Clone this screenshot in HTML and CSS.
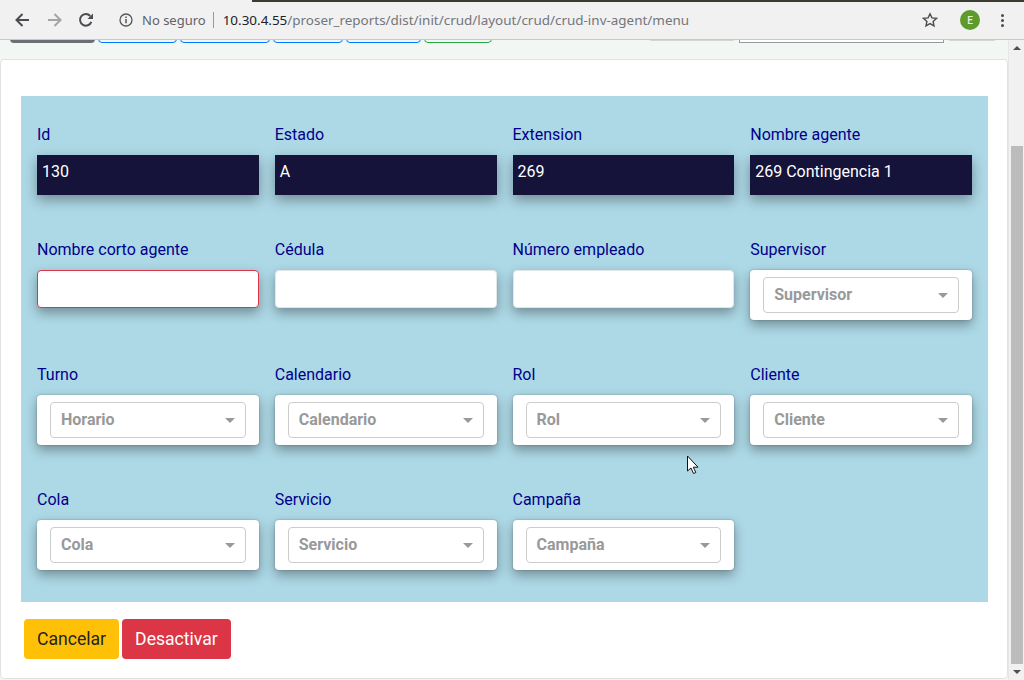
FILE: index.html
```html
<!DOCTYPE html>
<html>
<head>
    <title>CRUD agente</title>
    <link rel="stylesheet" href="styles.css">
</head>
<body>
    <div class="tabstrip"><div class="tab-end"></div></div>
    <div class="toolbar">
        <svg class="nav-icon" width="16" height="16" viewBox="0 0 16 16"><path d="M15 8H2.500M8.500 2 2.500 8l6 6" fill="none" stroke="#4a4c50" stroke-width="2"/></svg>
        <svg class="nav-icon" width="16" height="16" viewBox="0 0 16 16"><path d="M1 8h12.500M7.500 2l6 6-6 6" fill="none" stroke="#a3a4a6" stroke-width="2"/></svg>
        <svg class="nav-icon reload" width="16" height="16" viewBox="0 0 16 16"><path d="M13.300 9.800A5.800 5.800 0 1 1 12.200 4" fill="none" stroke="#4a4c50" stroke-width="2"/><path d="M9.500 7H15V1.500z" fill="#4a4c50"/></svg>
        <svg class="info-icon" width="14" height="14" viewBox="0 0 14 14"><circle cx="7" cy="7" r="6" fill="none" stroke="#55575a" stroke-width="1.300"/><path d="M7 6v4.300M7 3.500v1.400" stroke="#55575a" stroke-width="1.500"/></svg>
        <span class="secure">No seguro</span>
        <span class="sep"></span>
        <span class="url"><span class="host">10.30.4.55</span>/proser_reports/dist/init/crud/layout/crud/crud-inv-agent/menu</span>
        <svg class="star" width="16" height="16" viewBox="0 0 16 16"><path d="M8 1.800l1.900 4.100 4.500.5-3.300 3 .9 4.400L8 11.600l-4 2.200.9-4.400-3.300-3 4.500-.5z" fill="none" stroke="#4a4c50" stroke-width="1.400"/></svg>
        <span class="avatar">E</span>
        <span class="dots"><i></i><i></i><i></i></span>
    </div>

    <div class="viewport">
        <div class="page">
            <div class="top-buttons">
                <span class="tb tb-dark"></span>
                <span class="tb tb-blue tb-1"></span>
                <span class="tb tb-blue tb-2"></span>
                <span class="tb tb-blue tb-3"></span>
                <span class="tb tb-blue tb-4"></span>
                <span class="tb tb-green"></span>
                <span class="tb-spacer"></span>
                <span class="tb tb-grey tb-5"></span>
                <span class="tb-search"></span>
                <span class="tb tb-grey tb-6"></span>
            </div>
            <div class="card">
                <form class="panel">
                    <div class="field"><label>Id</label><div class="ro">130</div></div>
                    <div class="field"><label>Estado</label><div class="ro">A</div></div>
                    <div class="field"><label>Extension</label><div class="ro">269</div></div>
                    <div class="field"><label>Nombre agente</label><div class="ro">269 Contingencia 1</div></div>

                    <div class="field"><label>Nombre corto agente</label><div class="text-input invalid"></div></div>
                    <div class="field"><label>Cédula</label><div class="text-input"></div></div>
                    <div class="field"><label>Número empleado</label><div class="text-input"></div></div>
                    <div class="field"><label>Supervisor</label><div class="select-card"><div class="select-box"><span>Supervisor</span><i class="caret"></i></div></div></div>

                    <div class="field"><label>Turno</label><div class="select-card"><div class="select-box"><span>Horario</span><i class="caret"></i></div></div></div>
                    <div class="field"><label>Calendario</label><div class="select-card"><div class="select-box"><span>Calendario</span><i class="caret"></i></div></div></div>
                    <div class="field"><label>Rol</label><div class="select-card"><div class="select-box"><span>Rol</span><i class="caret"></i></div></div></div>
                    <div class="field"><label>Cliente</label><div class="select-card"><div class="select-box"><span>Cliente</span><i class="caret"></i></div></div></div>

                    <div class="field"><label>Cola</label><div class="select-card"><div class="select-box"><span>Cola</span><i class="caret"></i></div></div></div>
                    <div class="field"><label>Servicio</label><div class="select-card"><div class="select-box"><span>Servicio</span><i class="caret"></i></div></div></div>
                    <div class="field"><label>Campaña</label><div class="select-card"><div class="select-box"><span>Campaña</span><i class="caret"></i></div></div></div>
                </form>
                <div class="actions">
                    <button class="btn btn-cancel" type="button">Cancelar</button>
                    <button class="btn btn-off" type="button">Desactivar</button>
                </div>
            </div>
        </div>
        <div class="scrollbar">
            <div class="arrow-up"></div>
            <div class="track"><div class="thumb"></div></div>
            <div class="arrow-down"></div>
        </div>
    </div>

    <svg class="cursor" width="14" height="20" viewBox="0 0 14 20"><path d="M1.500 1v15l3.500-3 2.500 5.500 2.300-1-2.500-5.300H12z" fill="#fff" stroke="#111" stroke-width="1"/></svg>
</body>
</html>
```

FILE: styles.css
```css
html, body { margin: 0; height: 680px; overflow: hidden; }
body { font-family: Roboto, sans-serif; font-size: 16px; background: #f3f7f3; position: relative; }

/* browser chrome */
.tabstrip { height: 2px; background: #f1f1f2; }
.tab-end { height: 2px; margin-left: 252px; background: #3c3b32; }
.toolbar { height: 38px; padding-bottom: 1px; box-sizing: border-box; background: #f1f1f2; border-bottom: 1px solid #c9c9ca; display: flex; align-items: center; color: #5f6368; }
.nav-icon { margin-left: 14px; flex: none; }
.nav-icon + .nav-icon { margin-left: 17px; }
.nav-icon + .nav-icon.reload { margin-left: 15px; }
.info-icon { margin-left: 25px; flex: none; }
.secure { font-family: "Noto Sans", sans-serif; font-size: 13px; margin-left: 9px; color: #5f6368; }
.sep { width: 1px; height: 16px; background: #9a9b9d; margin: 0 9px 0 7px; }
.url { font-family: "Noto Sans", sans-serif; font-size: 13.450px; color: #73767a; flex: 1; white-space: nowrap; }
.host { color: #202124; }
.star { margin-right: 22px; flex: none; }
.avatar { width: 20px; height: 20px; border-radius: 50%; background: #5f9a2c; color: #e6f2d8; font-size: 10px; font-weight: 500; display: flex; align-items: center; justify-content: center; flex: none; }
.dots { display: flex; flex-direction: column; gap: 2px; margin: 0 20px 0 21px; }
.dots i { width: 3px; height: 3px; border-radius: 50%; background: #4a4c50; }

/* page */
.viewport { display: flex; height: 640px; }
.page { flex: 1; min-width: 0; }
.top-buttons { height: 3px; overflow: hidden; display: flex; align-items: flex-end; padding-left: 10px; gap: 3px; padding-right: 11px; }
.tb { height: 20px; flex: none; border-radius: 4px; box-sizing: border-box; }
.tb-dark { width: 85px; background: #6c6e75; }
.tb-blue { border: 1px solid #007bff; }
.tb-1 { width: 79px; }
.tb-2 { width: 90px; }
.tb-3 { width: 70px; }
.tb-4 { width: 75px; }
.tb-green { width: 68px; border: 1px solid #28a745; }
.tb-spacer { flex: 1; }
.tb-grey { background: #d3d5d3; margin-bottom: 2px; }
.tb-5 { width: 88px; }
.tb-search { width: 205px; height: 20px; box-sizing: border-box; background: #fff; border: 1px solid #999; flex: none; }
.tb-6 { width: 50px; }

.card { margin-top: 16px; height: 620px; box-sizing: border-box; background: #fff; border: 1px solid #dfe2df; border-radius: 4px; padding: 36px 20px 0 20px; }
.panel { width: 967px; box-sizing: border-box; background: #add8e6; padding: 27px 16px 32px; display: grid; grid-template-columns: repeat(4, 1fr); column-gap: 16px; row-gap: 43px; }
.field label { display: block; color: #00008b; line-height: 24px; margin-bottom: 8px; }
.ro { height: 40px; box-sizing: border-box; background: #15133a; color: #fff; padding: 0 5px; line-height: 33px; box-shadow: 0 5px 12px rgba(0, 0, 0, .35); }
.text-input { height: 38px; box-sizing: border-box; background: #fff; border: 1px solid #e2e6e8; border-radius: 4px; box-shadow: 0 5px 12px rgba(0, 0, 0, .35); }
.text-input.invalid { border-color: #dc3545; }
.select-card { height: 50px; box-sizing: border-box; background: #fff; border-radius: 4px; padding: 7px 13px; box-shadow: 0 5px 12px rgba(0, 0, 0, .35), 0 0 2px rgba(0, 0, 0, .3); }
.select-box { height: 36px; box-sizing: border-box; border: 1px solid #ccc; border-radius: 4px; padding: 0 10px; display: flex; align-items: center; justify-content: space-between; color: #999; font-weight: 700; }
.select-box span { margin-bottom: 2px; }
.caret { width: 0; height: 0; border-left: 5px solid transparent; border-right: 5px solid transparent; border-top: 5px solid #999; }

.actions { display: flex; gap: 3px; padding: 17px 0 0 3px; }
.btn { height: 40px; border: none; border-radius: 4px; font-family: Roboto, sans-serif; font-size: 17.600px; padding: 0 13px; }
.btn-cancel { background: #ffc107; color: #212529; }
.btn-off { background: #dc3545; color: #fff; }

.scrollbar { width: 16px; flex: none; background: #f1f1f1; border-left: 1px solid #e6e6e6; box-sizing: border-box; padding: 0 1px 0 2px; display: flex; flex-direction: column; }
.track { flex: 1; padding-top: 90px; }
.thumb { height: 518px; background: #bcbcbc; }
.arrow-up, .arrow-down { height: 17px; display: flex; justify-content: center; align-items: center; }
.arrow-up::before { content: ""; border-left: 4px solid transparent; border-right: 4px solid transparent; border-bottom: 4px solid #505050; }
.arrow-down::before { content: ""; border-left: 4px solid transparent; border-right: 4px solid transparent; border-top: 4px solid #505050; }

.cursor { position: absolute; left: 686px; top: 455px; }
```
